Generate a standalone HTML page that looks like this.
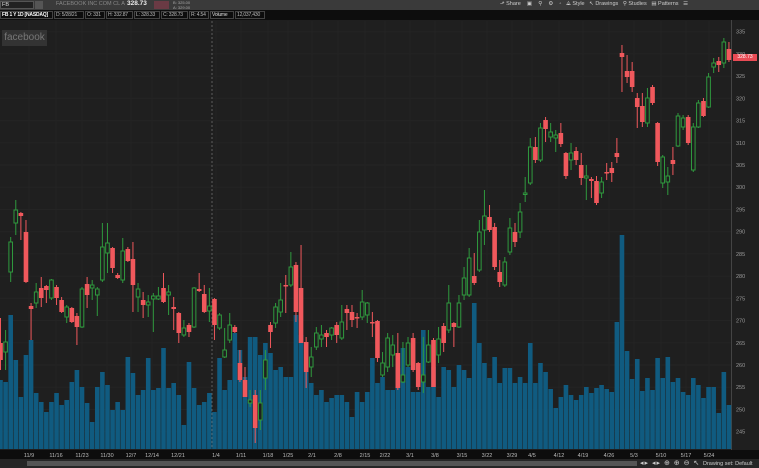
<!DOCTYPE html>
<html><head><meta charset="utf-8"><style>
body{margin:0;width:759px;height:468px;overflow:hidden;background:#1f1f1f;font-family:"Liberation Sans",sans-serif;}
#top{position:absolute;left:0;top:0;width:759px;height:10px;background:#3a3a3a;color:#ccc;font-size:6px;}
#r2{position:absolute;left:0;top:10px;width:759px;height:10px;background:#0d0d0d;}
.b{position:absolute;top:11px;height:8px;border:1px solid #444;box-sizing:border-box;color:#bbb;font-size:5px;line-height:6px;padding:0 1px;white-space:nowrap;overflow:hidden;letter-spacing:-0.2px}
.t{position:absolute;top:1px;white-space:nowrap;font-size:5.5px;color:#ccc}
svg{position:absolute;left:0;top:0}
</style></head><body>
<svg id="s" width="759" height="468"></svg>
<div id="top">
<div style="position:absolute;left:0;top:1px;width:34px;height:8px;background:#222;border:1px solid #555;box-sizing:border-box;font-size:5.5px;color:#ddd;padding-left:1px;line-height:6px">FB</div>
<div style="position:absolute;left:35px;top:1px;width:8px;height:8px;background:#555"></div>
<span class="t" style="left:56px;color:#888">FACEBOOK INC COM CL A</span>
<span class="t" style="left:127px;font-size:6.5px;top:0;font-weight:bold;color:#eee">328.73</span>
<div style="position:absolute;left:154px;top:1px;width:15px;height:8px;background:#6a3a44"></div>
<span class="t" style="left:173px;font-size:4px;top:0;color:#aaa">B: 325.00<br>A: 329.00</span>
<span class="t" style="left:500px">⬏ Share &nbsp;&nbsp; ▣ &nbsp;&nbsp; ⚲ &nbsp;&nbsp; ⚙ &nbsp;&nbsp; ◦ &nbsp; ⟁ Style &nbsp; ↖ Drawings &nbsp; ⚲ Studies &nbsp; ▤ Patterns &nbsp; ☰</span>
</div>
<div id="r2"></div>
<div class="b" style="left:0;width:53px;color:#fff;font-weight:bold">FB 1 Y 1D [NASDAQ]</div>
<div class="b" style="left:54px;width:30px">D: 5/28/21</div>
<div class="b" style="left:85px;width:20px">O: 331</div>
<div class="b" style="left:106px;width:27px">H: 332.87</div>
<div class="b" style="left:134px;width:26px">L: 328.33</div>
<div class="b" style="left:161px;width:27px">C: 328.73</div>
<div class="b" style="left:189px;width:20px">R: 4.54</div>
<div class="b" style="left:210px;width:24px;color:#ddd">Volume</div>
<div class="b" style="left:235px;width:30px">12,037,430</div>
<div style="position:absolute;left:2px;top:30px;width:45px;height:16px;background:#333;color:#777;font-size:10px;line-height:16px;text-align:center">facebook</div>
<div style="position:absolute;left:733px;top:54px;width:24px;height:7px;background:#e94b55;color:#fff;font-size:5px;line-height:7px;text-align:center">328.73</div>
<div style="position:absolute;left:703px;top:461px;font-size:5.5px;color:#ccc;white-space:nowrap">Drawing set: Default</div>
<div style="position:absolute;left:640px;top:459px;font-size:7px;color:#ccc;letter-spacing:1px;white-space:nowrap">◂▸ ◂▸ ⊕ ⊕ ⊖ ↖</div>
<script>
var C=[[343,360,318,370,0],[342,352,330,370,1],[242,272,237,282,1],[210,223,200,235,1],[213,216,212,240,0],[232,282,220,283,0],[306,309,303,340,0],[292,303,283,308,1],[288,298,277,307,0],[286,290,285,303,0],[280,298,279,300,1],[287,298,285,305,0],[300,312,297,313,0],[307,317,305,323,1],[308,322,307,323,0],[316,327,313,345,0],[289,327,287,328,1],[284,295,277,308,0],[285,288,280,300,1],[289,295,287,316,1],[247,280,223,282,1],[243,253,223,273,1],[248,268,247,273,0],[275,278,273,279,0],[251,280,238,283,1],[249,261,247,262,0],[259,285,242,312,0],[289,297,283,312,1],[300,305,292,318,0],[302,305,295,317,1],[296,299,293,332,1],[296,299,287,300,1],[288,302,273,303,0],[292,295,285,315,1],[307,309,297,330,0],[313,333,312,343,0],[328,335,320,337,1],[325,332,323,337,0],[288,327,287,328,1],[289,291,273,292,0],[294,312,285,313,0],[306,311,288,322,1],[299,325,298,340,0],[315,328,313,330,1],[350,357,328,358,1],[325,340,313,343,1],[327,332,325,333,0],[363,380,350,382,0],[380,397,367,397,0],[400,403,390,407,1],[395,428,390,443,0],[403,420,390,430,1],[360,378,350,390,1],[325,332,322,348,0],[307,323,303,328,1],[300,312,283,317,1],[285,286,275,313,0],[267,285,252,287,1],[265,312,262,322,0],[288,343,245,343,0],[342,372,337,388,0],[357,367,347,377,1],[333,347,327,350,1],[335,339,325,347,1],[333,337,330,347,0],[328,335,327,340,1],[325,335,322,343,0],[322,338,305,340,1],[309,313,305,330,0],[312,320,305,327,0],[317,318,313,328,0],[302,317,290,320,1],[303,315,302,323,1],[322,323,312,337,0],[321,358,320,362,0],[363,375,352,377,1],[338,367,333,372,1],[345,355,335,367,1],[353,388,333,390,0],[375,382,342,383,1],[343,365,337,367,1],[338,370,333,372,0],[363,387,362,390,0],[375,382,337,393,1],[345,362,330,363,1],[340,387,338,387,0],[339,355,327,363,1],[326,343,323,352,0],[303,330,285,333,1],[323,327,322,347,0],[303,327,295,328,1],[278,295,267,300,1],[258,295,248,297,1],[276,283,253,285,0],[232,270,220,272,1],[216,230,190,245,1],[217,230,205,232,0],[227,267,223,270,0],[272,282,260,287,0],[262,285,257,287,1],[228,252,218,255,1],[232,242,223,247,0],[212,232,203,238,1],[193,194,177,202,1],[147,183,138,185,1],[147,160,137,163,0],[128,160,123,162,1],[120,129,117,142,0],[132,137,123,142,1],[135,138,130,152,1],[133,144,123,147,0],[153,176,152,179,0],[153,160,143,170,1],[151,160,147,165,0],[165,178,153,185,0],[176,178,165,200,1],[179,181,177,198,0],[181,203,176,205,0],[182,193,177,198,1],[172,173,163,180,0],[168,173,162,182,0],[153,157,138,163,0],[53,57,45,92,0],[71,77,55,83,0],[71,87,62,92,0],[98,107,93,128,0],[106,122,93,127,0],[98,123,88,127,1],[87,103,85,105,0],[123,162,122,166,0],[157,183,155,188,1],[176,182,167,195,1],[160,164,147,175,0],[116,146,113,147,1],[118,127,115,130,1],[117,143,115,145,0],[127,170,123,172,1],[103,127,100,128,1],[101,116,98,117,0],[77,107,73,108,1],[63,67,58,73,1],[61,65,57,72,0],[42,63,38,68,1],[49,60,42,62,0]];
var V=[380,382,315,360,397,355,340,393,402,412,402,393,405,400,382,370,387,403,422,387,372,385,410,402,410,357,373,395,390,358,390,388,348,388,383,395,425,362,388,405,402,393,412,358,390,380,333,350,377,337,337,355,343,353,370,367,377,377,315,335,372,383,395,390,402,398,395,395,402,417,392,402,392,358,383,377,390,390,368,348,367,392,392,330,387,367,397,367,370,387,365,370,378,303,343,363,378,357,383,368,368,383,377,383,343,383,363,372,389,408,397,385,395,400,395,387,393,388,385,389,392,322,235,351,379,359,391,378,390,358,378,357,382,378,392,395,378,385,398,387,387,413,372,405];
var h='',sp=5.094;
for(var p=335;p>=245;p-=5){var y=31.7+(335-p)*4.444;h+='<line x1="0" x2="731" y1="'+y+'" y2="'+y+'" stroke="#242424" stroke-width="1"/>';h+='<text x="736" y="'+(y+2)+'" font-size="5.5" fill="#9a9a9a">'+p+'</text>';}
var D=[['11/9',29],['11/16',56],['11/23',82],['11/30',107],['12/7',131],['12/14',152],['12/21',178],['1/4',216],['1/11',241],['1/18',268],['1/25',288],['2/1',312],['2/8',338],['2/15',365],['2/22',385],['3/1',410],['3/8',435],['3/15',462],['3/22',487],['3/29',512],['4/5',532],['4/12',559],['4/19',583],['4/26',609],['5/3',634],['5/10',661],['5/17',686],['5/24',709]];
D.forEach(function(d){h+='<line x1="'+d[1]+'" x2="'+d[1]+'" y1="21" y2="449" stroke="#232323"/>';});
h+='<line x1="731.5" x2="731.5" y1="20" y2="450" stroke="#444"/>';
for(var i=0;i<V.length;i++){var x=0.5+i*sp;h+='<rect x="'+(x-2.3)+'" y="'+V[i]+'" width="4.6" height="'+(449-V[i])+'" fill="#105b80"/>';}
h+='<line x1="212" x2="212" y1="21" y2="449" stroke="#777" stroke-dasharray="2,2" stroke-width="0.7"/>';
for(var i=0;i<C.length;i++){var c=C[i],x=0.5+i*sp,col=c[4]?'#2f9a3e':'#f0585c';
h+='<line x1="'+x+'" x2="'+x+'" y1="'+c[2]+'" y2="'+c[3]+'" stroke="'+col+'" stroke-width="1"/>';
var bh=Math.max(c[1]-c[0],1.5);
if(c[4])h+='<rect x="'+(x-1.8)+'" y="'+c[0]+'" width="3.6" height="'+bh+'" fill="#1f1f1f" stroke="'+col+'" stroke-width="1"/>';
else h+='<rect x="'+(x-2.3)+'" y="'+c[0]+'" width="4.6" height="'+bh+'" fill="'+col+'"/>';}
h+='<rect x="0" y="450" width="759" height="9" fill="#0d0d0d"/>';
D.forEach(function(d){h+='<text x="'+d[1]+'" y="457" font-size="5.5" fill="#bbb" text-anchor="middle">'+d[0]+'</text>';});
h+='<rect x="0" y="459" width="759" height="9" fill="#262626"/><rect x="27" y="461" width="610" height="5" fill="#555"/>';
document.getElementById('s').innerHTML=h;
</script>
</body></html>
